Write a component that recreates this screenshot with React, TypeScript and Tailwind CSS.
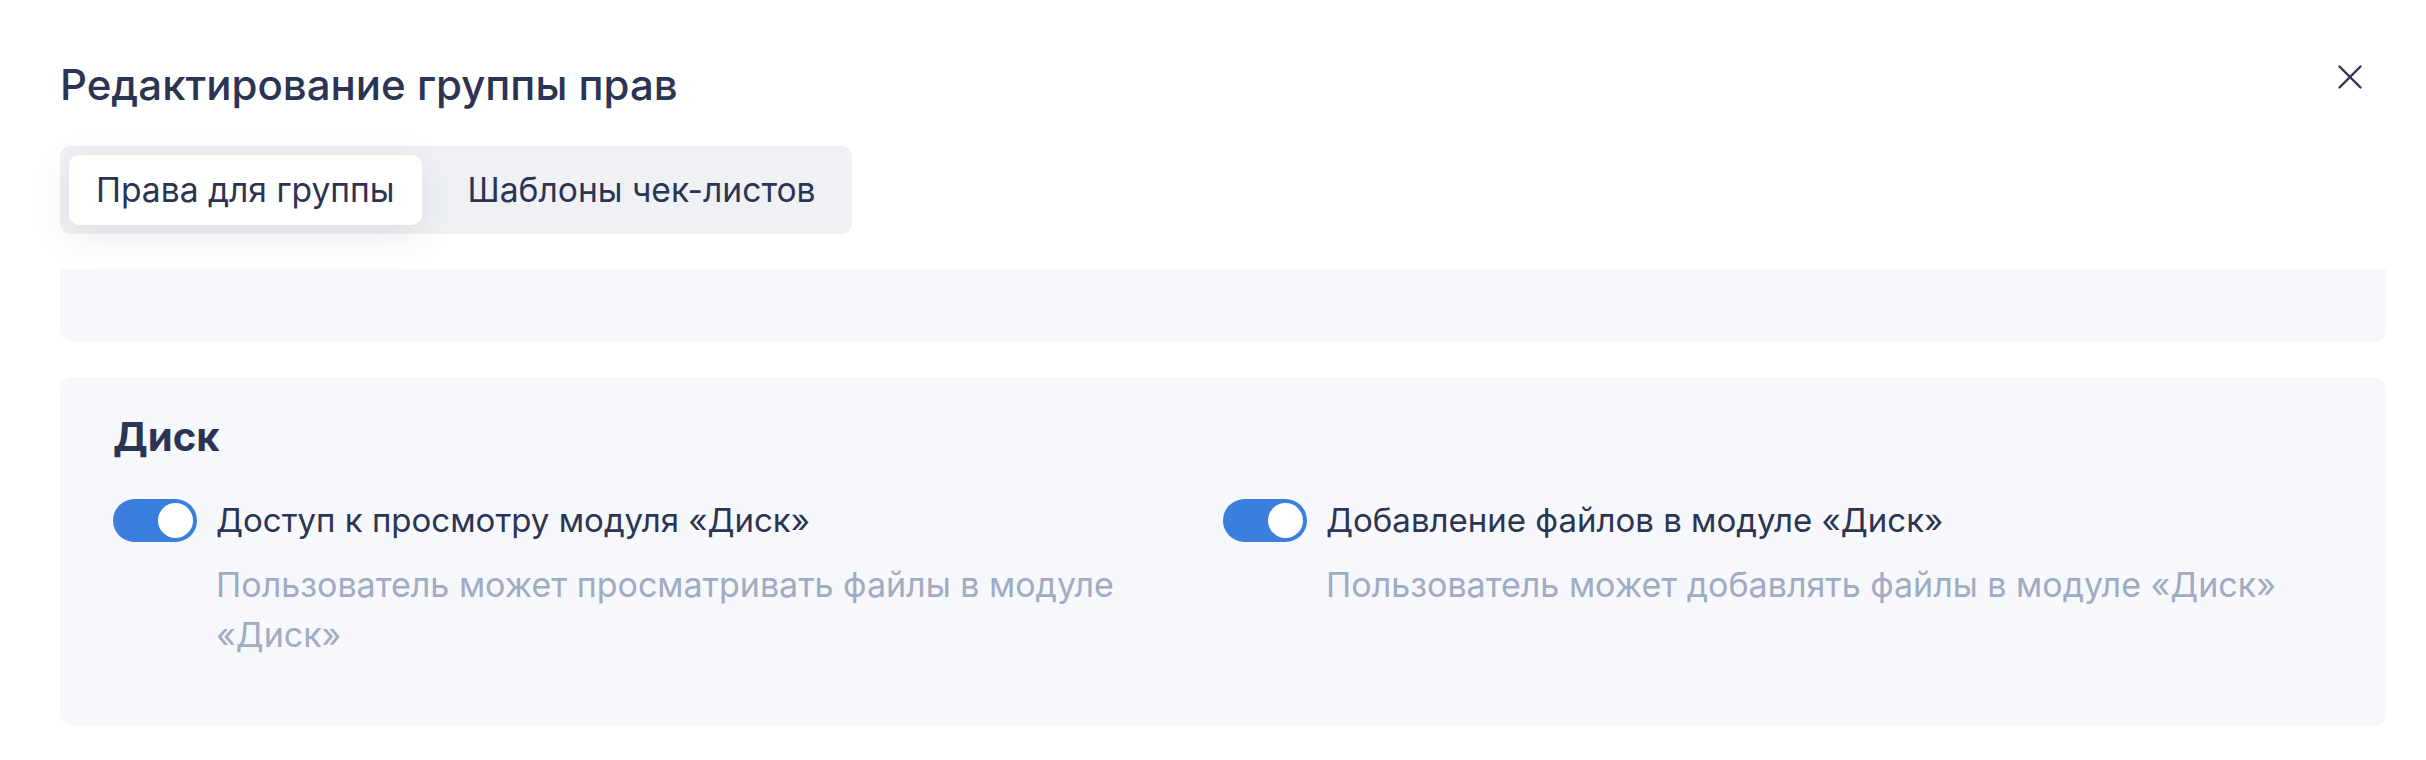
import React, { useState } from "react";

const Toggle = ({ checked }: { checked: boolean }) => (
  <div
    className={`flex h-[43px] w-[84px] shrink-0 items-center rounded-full px-[4px] ${
      checked ? "justify-end bg-[#3a7ee0]" : "justify-start bg-[#d5dae5]"
    }`}
  >
    <div className="h-[35px] w-[35px] rounded-full bg-white" />
  </div>
);

const PermissionItem = ({ title, description }: { title: string; description: string }) => (
  <div className="flex flex-col">
    <div className="flex items-center gap-[19px]">
      <Toggle checked />
      <span className="text-[33px] leading-[50px]">{title}</span>
    </div>
    <p className="mt-[15px] pl-[103px] text-[34px] leading-[50px] text-[#a0abc4]">{description}</p>
  </div>
);

const App = () => {
  const [activeTab, setActiveTab] = useState(0);
  const tabs = ["Права для группы", "Шаблоны чек-листов"];

  return (
    <div className="min-h-screen bg-white font-['Inter',sans-serif] text-[#2b3553]">
      <div className="flex flex-col pl-[60px] pr-[40px] pt-[59px]">
        <div className="flex items-start justify-between">
          <h1 className="text-[42px] font-medium leading-[52px]">Редактирование группы прав</h1>
          <button className="mr-[24px] mt-[6px] text-[#2b3553]">
            <svg width="24" height="24" viewBox="0 0 24 24" fill="none" stroke="currentColor" strokeWidth="2.4" strokeLinecap="round">
              <path d="M1.5 1.5L22.5 22.5M22.5 1.5L1.5 22.5" />
            </svg>
          </button>
        </div>

        <div className="mt-[35px] flex w-fit gap-[19px] rounded-[10px] bg-[#eff1f5] p-[9px]">
          {tabs.map((tab, i) => (
            <button
              key={tab}
              onClick={() => setActiveTab(i)}
              className={`h-[70px] rounded-[10px] px-[27px] text-[33.6px] ${
                activeTab === i ? "bg-white shadow-[0_10px_40px_rgba(43,53,83,0.10)]" : ""
              }`}
            >
              {tab}
            </button>
          ))}
        </div>

        <div className="mt-[35px] h-[73px] rounded-b-[12px] bg-[#f7f8fb]" />

        <div className="mt-[35px] rounded-[12px] bg-[#f7f8fb] pb-[66px] pl-[53px] pr-[53px] pt-[36px]">
          <h2 className="text-[40px] font-bold leading-[48px]">Диск</h2>
          <div className="mt-[34px] grid grid-cols-2">
            <PermissionItem
              title="Доступ к просмотру модуля «Диск»"
              description="Пользователь может просматривать файлы в модуле «Диск»"
            />
            <PermissionItem
              title="Добавление файлов в модуле «Диск»"
              description="Пользователь может добавлять файлы в модуле «Диск»"
            />
          </div>
        </div>
      </div>
    </div>
  );
};

export default App;
